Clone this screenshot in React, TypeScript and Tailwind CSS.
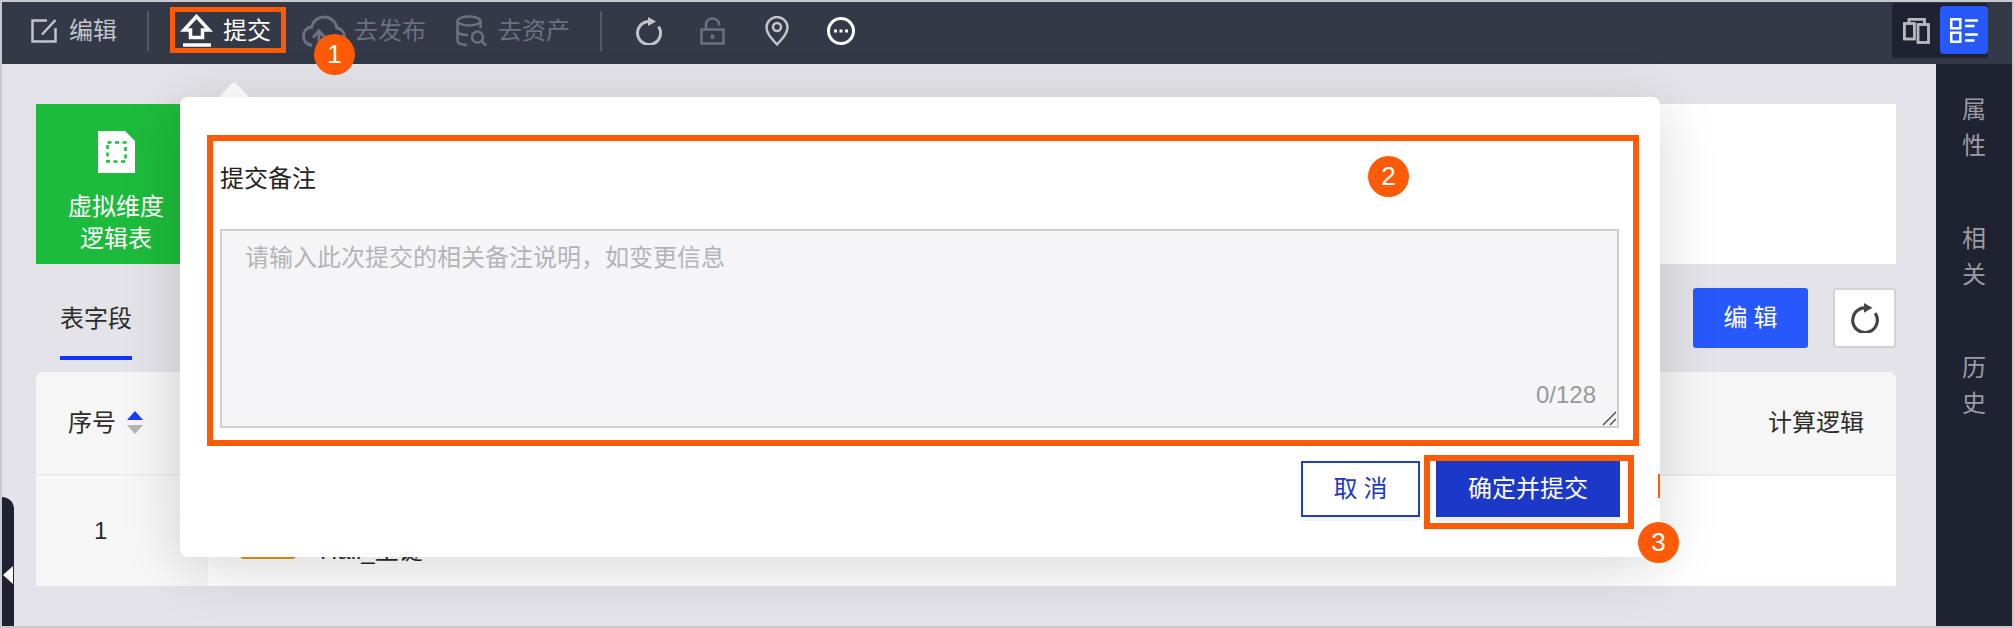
const Dim = "#6c7080";
const Light = "#c3c4c9";

function RefreshIcon({ color, className = "" }: { color: string; className?: string }) {
  return (
    <svg viewBox="0 0 26 28" className={className} fill="none">
      <path d="M13 4.5A11.5 11.5 0 1 0 22.5 9.5" stroke={color} strokeWidth="3" />
      <path d="M12 0L20 4.5L12 9Z" fill={color} />
    </svg>
  );
}

function Badge({ n, className }: { n: number; className: string }) {
  return (
    <div
      className={`absolute w-[41px] h-[41px] rounded-full bg-[#ff5a06] text-white text-[26px] flex items-center justify-center ${className}`}
    >
      {n}
    </div>
  );
}

function Toolbar() {
  return (
    <div className="h-[62px] shrink-0 bg-[#343948] flex items-center pb-[5px] text-[24px] leading-[36px]">
      <svg viewBox="0 0 26 24" className="w-[26px] h-[24px] ml-[29px]" fill="none" stroke={Light} strokeWidth="2.5">
        <path d="M16 1.5H1.5V22.5H24.5V9" />
        <path d="M24.5 1L11 15.5" />
      </svg>
      <span className="ml-[12px] text-[#c3c4c9]">编辑</span>
      <div className="w-[2px] h-[40px] bg-[#555a68] ml-[30px]" />

      <svg viewBox="0 0 33 33" className="w-[33px] h-[33px] ml-[31px]" fill="none" stroke="#fff" strokeWidth="3.5">
        <path d="M16.5 2.5L4 16H10.500V23.500H22.500V16H29Z" />
        <path d="M3 31H31" />
      </svg>
      <span className="ml-[10px] text-white">提交</span>

      <svg viewBox="0 0 44 32" className="w-[44px] h-[32px] ml-[31px]" fill="none" stroke={Dim} strokeWidth="3">
        <path d="M10 30C4.500 30 1.500 25.500 1.500 21C1.500 16 5 12.500 9.500 12C11 6 16 2 22 2C29 2 34 7 35 13C39.500 14 42.500 17.500 42.500 22C42.500 26.500 39 30 34.500 30" />
        <path d="M17 31V17M11 22.500L17 16L23 22.500" />
      </svg>
      <span className="ml-[8px] text-[#6c7080]">去发布</span>

      <svg viewBox="0 0 32 32" className="w-[32px] h-[32px] ml-[30px]" fill="none" stroke={Dim} strokeWidth="2.5">
        <ellipse cx="13" cy="6" rx="11.500" ry="4.500" />
        <path d="M1.500 6V26C1.500 28.500 6 30 11 30" />
        <path d="M24.500 6V13" />
        <path d="M1.500 16C1.500 18.500 6 20 12 20" />
        <circle cx="21.500" cy="22" r="5.500" />
        <path d="M25.500 26L30 30.500" />
      </svg>
      <span className="ml-[10px] text-[#6c7080]">去资产</span>
      <div className="w-[2px] h-[40px] bg-[#555a68] ml-[30px]" />

      <RefreshIcon color={Light} className="w-[26px] h-[28px] ml-[34px]" />

      <svg viewBox="0 0 25 28" className="w-[25px] h-[28px] ml-[38px]" fill="none" stroke={Dim} strokeWidth="2.5">
        <rect x="1.500" y="12.500" width="22" height="14" />
        <path d="M6 12V7.500C6 4 9 1.500 12.500 1.500C16 1.500 19 4 19 7.500V8.500" />
        <path d="M12.500 17.500V22" strokeWidth="3.500" />
      </svg>

      <svg viewBox="0 0 24 30" className="w-[24px] h-[30px] ml-[40px]" fill="none" stroke={Light} strokeWidth="2.5">
        <path d="M12 28.500C6 22 1.500 17 1.500 11.500A10.500 10.500 0 0 1 22.500 11.500C22.500 17 18 22 12 28.500Z" />
        <circle cx="12" cy="11" r="4" />
      </svg>

      <svg viewBox="0 0 28 28" className="w-[28px] h-[28px] ml-[38px]" fill="none">
        <circle cx="14" cy="14" r="12.500" stroke="#fff" strokeWidth="3" />
        <rect x="7" y="12.500" width="3" height="3" fill="#fff" />
        <rect x="12.500" y="12.500" width="3" height="3" fill="#fff" />
        <rect x="18" y="12.500" width="3" height="3" fill="#fff" />
      </svg>

      <div className="ml-auto mr-[24px] self-start mt-[1px] w-[96px] h-[55px] rounded-[4px] bg-[#1f2231] flex justify-end pt-[3px]">
        <div className="flex-1 flex items-start justify-center pt-[12px]">
          <svg viewBox="0 0 27 26" className="w-[27px] h-[26px]" fill="none" stroke="#b9bac0" strokeWidth="2.8">
            <rect x="1.400" y="5.500" width="10" height="15.500" />
            <rect x="15" y="6.500" width="10.500" height="18" />
            <path d="M6 5V1.400H21.500V6" />
          </svg>
        </div>
        <div className="w-[48px] h-[48px] rounded-[4px] bg-[#2658fb] flex items-center justify-center">
          <svg viewBox="0 0 28 25" className="w-[28px] h-[25px]" fill="none" stroke="#fff" strokeWidth="2.500">
            <rect x="1.250" y="1.250" width="9" height="9" />
            <rect x="1.250" y="14.750" width="9" height="9" />
            <path d="M15 2.500H28M15 8H24.500M15 16.500H28M15 22.500H24.500" />
          </svg>
        </div>
      </div>
    </div>
  );
}

function MainPanel() {
  return (
    <div className="flex-1 pl-[34px] pr-[40px] pt-[40px] text-[24px] leading-[36px] text-[#2b2b2b]">
      <div className="h-[160px] bg-white">
        <div className="w-[160px] h-[160px] bg-[#1dbb3c] flex flex-col items-center pt-[27px] text-white leading-[32px]">
          <svg viewBox="0 0 37 42" className="w-[37px] h-[42px] mb-[18px]">
            <path d="M0 0H27L37 10V42H0Z" fill="#fff" />
            <rect x="9.500" y="11.500" width="18" height="19" fill="none" stroke="#1dbb3c" strokeWidth="2.500" strokeDasharray="4 3.500" />
          </svg>
          <span>虚拟维度</span>
          <span>逻辑表</span>
        </div>
      </div>

      <div className="h-[108px] flex items-start justify-between">
        <div className="ml-[24px] pt-[37px]">
          <div>表字段</div>
          <div className="h-[4px] mt-[19px] bg-[#0f35ff]" />
        </div>
        <div className="flex pt-[24px] gap-[25px]">
          <button className="w-[115px] h-[60px] rounded-[3px] bg-[#2658fb] text-white tracking-[6px] pl-[6px]">编辑</button>
          <button className="w-[63px] h-[60px] rounded-[3px] bg-white border-2 border-[#d2d2d4] flex items-center justify-center">
            <RefreshIcon color="#444" className="w-[28px] h-[30px]" />
          </button>
        </div>
      </div>

      <div className="rounded-t-lg bg-white">
        <div className="h-[104px] bg-[#f6f6f7] border-b-2 border-[#ececee] rounded-t-lg flex items-center justify-between pl-[32px] pr-[32px]">
          <div className="flex items-center gap-[11px]">
            <span>序号</span>
            <svg viewBox="0 0 16 24" className="w-[16px] h-[24px]">
              <path d="M8 0L16 9H0Z" fill="#1a3cff" />
              <path d="M0 14H16L8 23Z" fill="#b5b5b5" />
            </svg>
          </div>
          <span>计算逻辑</span>
        </div>
        <div className="h-[110px] flex">
          <div className="w-[172px] bg-[#f7f7f8] flex items-center pl-[58px]">1</div>
          <div className="flex items-start pt-[47px] pl-[32px] gap-[24px]">
            <div className="w-[56px] h-[36px] rounded-b-[4px] bg-[#e69317]" />
            <span className="pt-[10px]">Hail_主键</span>
          </div>
        </div>
      </div>
    </div>
  );
}

function SubmitModal() {
  return (
    <>
      <div className="absolute left-[221px] top-[84px] w-[22px] h-[22px] rotate-45 rounded-[3px] bg-white" />
      <div className="absolute left-[178px] top-[95px] w-[1480px] h-[460px] rounded-lg bg-white shadow-[0_10px_60px_rgba(0,0,0,0.16)] pl-[40px] pr-[40px] pt-[64px] text-[24px] leading-[36px]">
        <div className="text-[#222]">提交备注</div>
        <div className="relative mt-[32px] w-[1399px] h-[199px]">
          <textarea
            placeholder="请输入此次提交的相关备注说明，如变更信息"
            className="block w-full h-full resize-none border-2 border-[#cfcfd2] bg-[#f5f5f7] pl-[23px] pt-[9px] placeholder:text-[#b4b4b6]"
          />
          <span className="absolute right-[23px] top-[148px] text-[#999]">0/128</span>
          <svg viewBox="0 0 15 15" className="absolute right-[2px] bottom-[2px] w-[15px] h-[15px]" fill="none" stroke="#444" strokeWidth="1.3">
            <path d="M1 14L14 1M8 14L14 8" />
          </svg>
        </div>
        <div className="mt-[33px] flex justify-end gap-[16px]">
          <button className="w-[119px] h-[56px] border-2 border-[#1f3fc9] bg-white text-[#1b38c8] tracking-[6px] pl-[6px] shadow-[0_4px_0_#f4f4f5]">取消</button>
          <button className="w-[184px] h-[56px] bg-[#1b38c8] text-white shadow-[0_4px_0_#eeeeef]">确定并提交</button>
        </div>
      </div>
    </>
  );
}

export default function App() {
  return (
    <div className="relative w-[2014px] h-[628px] overflow-hidden border-2 border-[#c9c9cd] bg-[#e3e3e9] flex flex-col font-['Liberation_Sans','Noto_Sans_CJK_SC',sans-serif]">
      <Toolbar />
      <div className="flex-1 flex">
        <MainPanel />
        <div className="w-[76px] bg-[#1f2231] flex flex-col items-center pt-[28px] gap-[57px] text-[24px] leading-[36px] text-[#9b9ca3]">
          <div className="flex flex-col"><span>属</span><span>性</span></div>
          <div className="flex flex-col"><span>相</span><span>关</span></div>
          <div className="flex flex-col"><span>历</span><span>史</span></div>
        </div>
      </div>

      {/* collapse handle on the left edge */}
      <div className="absolute left-0 top-[495px] bottom-0 w-[12px] rounded-tr-[12px] bg-[#1f2231] flex items-end pb-[42px]">
        <div className="w-0 h-0 ml-[1px] border-y-[9px] border-y-transparent border-r-[10px] border-r-white" />
      </div>

      <SubmitModal />

      {/* annotation boxes drawn over the screenshot */}
      <div className="absolute left-[168px] top-[5px] w-[116px] h-[46px] border-[5px] border-[#ff5a06]" />
      <div className="absolute left-[205px] top-[133px] w-[1432px] h-[311px] border-[6px] border-[#ff5a06]" />
      <div className="absolute left-[1422px] top-[453px] w-[210px] h-[74px] border-[6px] border-[#ff5a06]" />
      <div className="absolute left-[1656px] top-[472px] w-[2px] h-[24px] bg-[#ff5a06]" />
      <Badge n={1} className="left-[312px] top-[32px]" />
      <Badge n={2} className="left-[1366px] top-[154px]" />
      <Badge n={3} className="left-[1636px] top-[520px]" />
    </div>
  );
}
